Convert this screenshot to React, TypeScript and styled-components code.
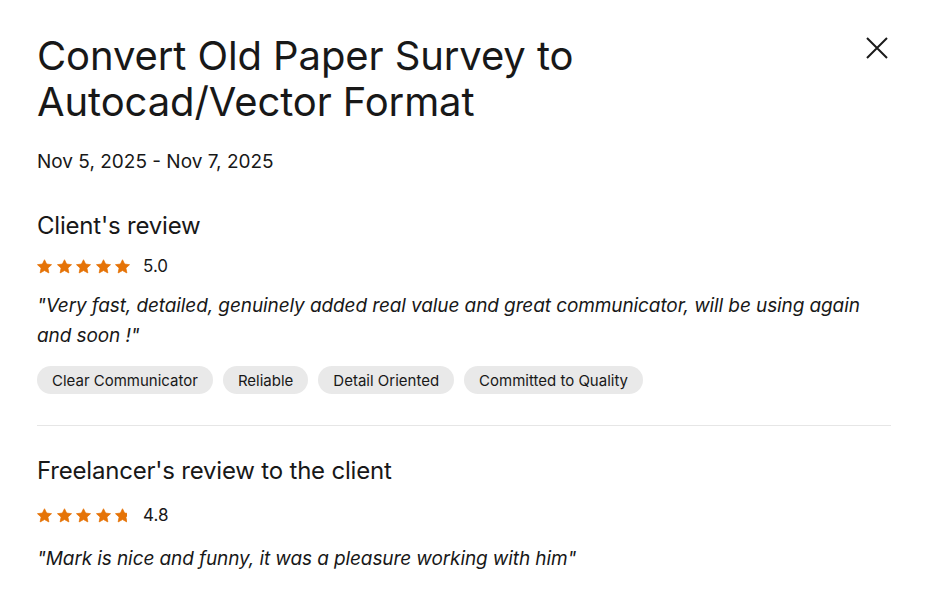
import React from "react";
import styled, { createGlobalStyle } from "styled-components";

const Global = createGlobalStyle`
  html, body { margin: 0; padding: 0; background: #fff; }
  body { font-family: Inter, "Liberation Sans", Arial, sans-serif; color: #181818; -webkit-font-smoothing: antialiased; }
  * { box-sizing: border-box; }
`;

const Modal = styled.div`
  width: 925px;
  padding: 33px 34px 0 37px;
  display: flex;
  flex-direction: column;
`;

const Header = styled.div`
  display: flex;
  justify-content: space-between;
  align-items: flex-start;
`;

const Title = styled.h1`
  margin: 0;
  font-size: 40px;
  font-weight: 400;
  line-height: 46px;
  letter-spacing: -0.1px;
  max-width: 620px;
`;

const CloseButton = styled.button`
  border: none;
  background: none;
  padding: 0;
  margin: 1px 0 0 0;
  width: 28px;
  height: 28px;
  display: flex;
  align-items: center;
  justify-content: center;
  cursor: pointer;
`;

const DateRange = styled.div`
  margin-top: 24px;
  font-size: 19px;
  line-height: 26px;
`;

const Section = styled.section`
  display: flex;
  flex-direction: column;
`;

const SectionTitle = styled.h2<{ $top: number }>`
  margin: ${(p) => p.$top}px 0 0;
  font-size: 24px;
  font-weight: 400;
  line-height: 30px;
  letter-spacing: -0.2px;
`;

const RatingRow = styled.div<{ $top: number }>`
  display: flex;
  align-items: center;
  gap: 13px;
  margin-top: ${(p) => p.$top}px;
`;

const Stars = styled.div`
  display: flex;
  gap: 4.5px;
`;

const Score = styled.span`
  font-size: 17px;
  line-height: 20px;
`;

const Quote = styled.p<{ $top: number }>`
  margin: ${(p) => p.$top}px 0 0;
  font-size: 19px;
  font-style: italic;
  line-height: 30px;
  letter-spacing: -0.1px;
`;

const Chips = styled.div`
  display: flex;
  gap: 10px;
  margin-top: 15px;
`;

const Chip = styled.span`
  background: #e9e9e9;
  border-radius: 14px;
  height: 28px;
  padding: 0 15px;
  display: flex;
  align-items: center;
  font-size: 15px;
`;

const Divider = styled.hr`
  border: none;
  border-top: 1px solid #e6e6e6;
  margin: 31px 0 0;
  width: 100%;
`;

const STAR =
  "M8 0.8L10.23 5.43L15.5 6.05L11.61 9.67L12.65 14.85L8 12.3L3.35 14.85L4.39 9.67L0.5 6.05L5.77 5.43Z";

function Star({ fill, id }: { fill: number; id: string }) {
  return (
    <svg width="15" height="15" viewBox="0 0 16 16">
      <defs>
        <clipPath id={id}>
          <rect x="0" y="0" width={16 * fill} height="16" />
        </clipPath>
      </defs>
      <path
        d={STAR}
        fill="#e57307"
        stroke="#e57307"
        strokeWidth="0.8"
        strokeLinejoin="round"
        clipPath={`url(#${id})`}
      />
    </svg>
  );
}

function Rating({ value, name, top }: { value: number; name: string; top: number }) {
  return (
    <RatingRow $top={top}>
      <Stars>
        {[0, 1, 2, 3, 4].map((i) => (
          <Star key={i} id={`${name}-${i}`} fill={Math.max(0, Math.min(1, value - i))} />
        ))}
      </Stars>
      <Score>{value.toFixed(1)}</Score>
    </RatingRow>
  );
}

export default function App() {
  return (
    <>
      <Global />
      <Modal>
        <Header>
          <Title>Convert Old Paper Survey to Autocad/Vector Format</Title>
          <CloseButton aria-label="Close">
            <svg width="24" height="24" viewBox="0 0 24 24">
              <path d="M2 2L22 22M22 2L2 22" stroke="#1a1a1a" strokeWidth="2" fill="none" />
            </svg>
          </CloseButton>
        </Header>
        <DateRange>Nov 5, 2025 - Nov 7, 2025</DateRange>
        <Section>
          <SectionTitle $top={36}>Client's review</SectionTitle>
          <Rating value={5} name="client" top={15} />
          <Quote $top={15}>
            "Very fast, detailed, genuinely added real value and great communicator, will be using again and soon !"
          </Quote>
          <Chips>
            <Chip>Clear Communicator</Chip>
            <Chip>Reliable</Chip>
            <Chip>Detail Oriented</Chip>
            <Chip>Committed to Quality</Chip>
          </Chips>
        </Section>
        <Divider />
        <Section>
          <SectionTitle $top={30}>Freelancer's review to the client</SectionTitle>
          <Rating value={4.8} name="free" top={19} />
          <Quote $top={19}>"Mark is nice and funny, it was a pleasure working with him"</Quote>
        </Section>
      </Modal>
    </>
  );
}
